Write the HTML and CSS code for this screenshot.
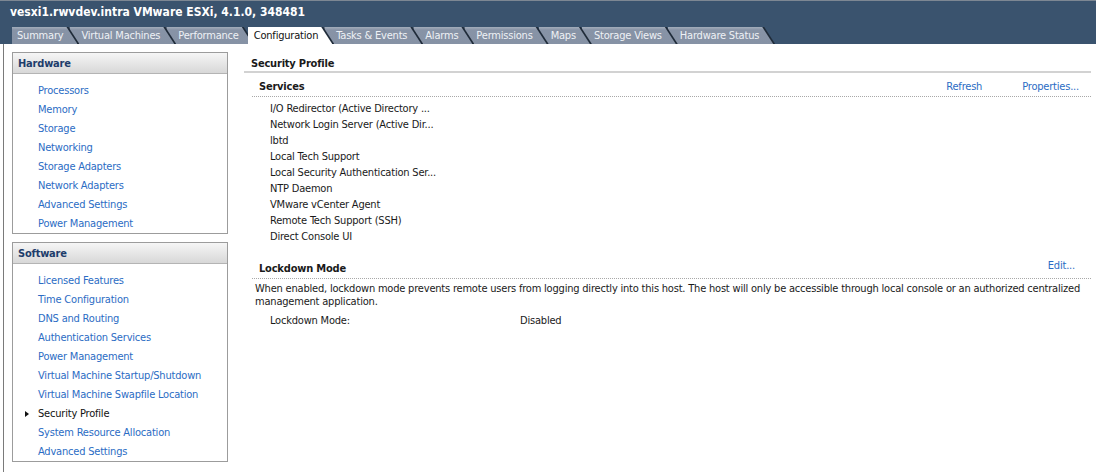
FILE: index.html
```html
<!DOCTYPE html>
<html lang="en">
<head>
  <meta charset="UTF-8">
  <title>vesxi1.rwvdev.intra - Configuration</title>
  <link rel="stylesheet" href="styles.css">
</head>
<body>

  <div class="header">
    <div class="host-title">vesxi1.rwvdev.intra VMware ESXi, 4.1.0, 348481</div>
    <div class="tabs">
      <div class="tab"><span>Summary</span></div>
      <div class="tab"><span>Virtual Machines</span></div>
      <div class="tab"><span>Performance</span></div>
      <div class="tab active"><span>Configuration</span></div>
      <div class="tab"><span>Tasks &amp; Events</span></div>
      <div class="tab"><span>Alarms</span></div>
      <div class="tab"><span>Permissions</span></div>
      <div class="tab"><span>Maps</span></div>
      <div class="tab"><span>Storage Views</span></div>
      <div class="tab"><span>Hardware Status</span></div>
    </div>
  </div>

  <div class="main">
    <div class="sidebar">
      <div class="panel">
        <div class="panel-head">Hardware</div>
        <ul class="panel-list">
          <li><a href="#">Processors</a></li>
          <li><a href="#">Memory</a></li>
          <li><a href="#">Storage</a></li>
          <li><a href="#">Networking</a></li>
          <li><a href="#">Storage Adapters</a></li>
          <li><a href="#">Network Adapters</a></li>
          <li><a href="#">Advanced Settings</a></li>
          <li><a href="#">Power Management</a></li>
        </ul>
      </div>
      <div class="panel">
        <div class="panel-head">Software</div>
        <ul class="panel-list">
          <li><a href="#">Licensed Features</a></li>
          <li><a href="#">Time Configuration</a></li>
          <li><a href="#">DNS and Routing</a></li>
          <li><a href="#">Authentication Services</a></li>
          <li><a href="#">Power Management</a></li>
          <li><a href="#">Virtual Machine Startup/Shutdown</a></li>
          <li><a href="#">Virtual Machine Swapfile Location</a></li>
          <li class="selected">Security Profile</li>
          <li><a href="#">System Resource Allocation</a></li>
          <li><a href="#">Advanced Settings</a></li>
        </ul>
      </div>
    </div>

    <div class="content">
      <div class="page-title">Security Profile</div>

      <div class="section-head">
        <span class="section-name">Services</span>
        <span class="actions">
          <a href="#">Refresh</a>
          <a href="#">Properties...</a>
        </span>
      </div>
      <ul class="services">
        <li>I/O Redirector (Active Directory ...</li>
        <li>Network Login Server (Active Dir...</li>
        <li>lbtd</li>
        <li>Local Tech Support</li>
        <li>Local Security Authentication Ser...</li>
        <li>NTP Daemon</li>
        <li>VMware vCenter Agent</li>
        <li>Remote Tech Support (SSH)</li>
        <li>Direct Console UI</li>
      </ul>

      <div class="section-head lockdown">
        <span class="section-name">Lockdown Mode</span>
        <span class="actions">
          <a href="#">Edit...</a>
        </span>
      </div>
      <p class="note">When enabled, lockdown mode prevents remote users from logging directly into this host. The host will only be accessible through local console or an authorized centralized management application.</p>
      <div class="prop-row">
        <span class="prop-name">Lockdown Mode:</span>
        <span>Disabled</span>
      </div>
    </div>
  </div>

</body>
</html>
```

FILE: styles.css
```css
body {
  margin: 0;
  font-family: "DejaVu Sans Condensed", "DejaVu Sans", sans-serif;
  font-stretch: condensed;
  font-size: 11px;
  letter-spacing: -0.2px;
  color: #1a1a1a;
  background: #fff;
}

a {
  color: #2b6cc4;
  text-decoration: none;
}

ul {
  list-style: none;
  margin: 0;
  padding: 0;
}

/* top bar */

.header {
  background: #3a536e;
  border-top: 1px solid #7d8793;
  height: 43px;
  display: flex;
  flex-direction: column;
  justify-content: space-between;
}

.host-title {
  color: #fff;
  font-weight: bold;
  font-size: 12px;
  letter-spacing: 0;
  padding: 4px 0 0 10px;
}

.tabs {
  display: flex;
  padding-left: 12px;
  height: 17px;
}

.tab {
  position: relative;
  background: #1f2b39;
  padding-right: 2px;
  margin-right: -10px;
  clip-path: polygon(0 0, calc(100% - 11px) 0, 100% 100%, 0 100%);
}

.tab span {
  display: block;
  height: 17px;
  line-height: 18px;
  padding: 0 14px 0 5px;
  background: linear-gradient(#a3adbb, #8793a6 3px, #8692a5);
  color: #eef1f5;
  clip-path: polygon(0 0, calc(100% - 11px) 0, 100% 100%, 0 100%);
}

.tab:nth-child(1) { z-index: 10; }
.tab:nth-child(2) { z-index: 9; }
.tab:nth-child(3) { z-index: 8; }
.tab:nth-child(4) { z-index: 7; }
.tab:nth-child(5) { z-index: 6; }
.tab:nth-child(6) { z-index: 5; }
.tab:nth-child(7) { z-index: 4; }
.tab:nth-child(8) { z-index: 3; }
.tab:nth-child(9) { z-index: 2; }
.tab:nth-child(10) { z-index: 1; }

.tab:not(:first-child) span {
  padding-left: 12px;
}

.tab.active {
  z-index: 20;
  margin-left: 3px;
}

.tab.active span {
  background: #fff;
  color: #111;
  padding-left: 6px;
}

/* body */

.main {
  display: flex;
  margin-left: 3px;
  border-left: 1px solid #7a7a7a;
  height: 428px;
}

.sidebar {
  width: 216px;
  margin-left: 8px;
  padding-top: 8px;
  display: flex;
  flex-direction: column;
  gap: 8px;
}

.panel {
  border: 1px solid #9c9c9c;
}

.panel-head {
  height: 20px;
  line-height: 21px;
  padding-left: 5px;
  font-weight: bold;
  color: #1e3d6b;
  background: linear-gradient(#f6f6f6, #d8d8d8);
  border-bottom: 1px solid #b4b4b4;
}

.panel-list {
  padding: 7px 0 0 25px;
}

.panel-list li {
  height: 19px;
  line-height: 19px;
}

.panel-list li.selected {
  position: relative;
  color: #111;
}

.panel-list li.selected::before {
  content: "";
  position: absolute;
  left: -13px;
  top: 7px;
  border-left: 4px solid #111;
  border-top: 3px solid transparent;
  border-bottom: 3px solid transparent;
}

.content {
  flex: 1;
  margin-left: 16px;
  margin-right: 5px;
}

.page-title {
  font-weight: bold;
  height: 19px;
  line-height: 23px;
  padding: 8px 0 0 7px;
  border-bottom: 2px solid #d2d2d2;
}

.section-head {
  display: flex;
  justify-content: space-between;
  margin: 4px 0 0 8px;
  height: 19px;
  line-height: 20px;
  border-bottom: 1px dotted #a8a8a8;
}

.section-name {
  font-weight: bold;
  padding-left: 7px;
}

.actions {
  display: flex;
  gap: 40px;
  padding-right: 12px;
}

.section-head.lockdown {
  margin-top: 14px;
}

.section-head.lockdown .actions {
  padding-right: 16px;
  line-height: 13px;
}

.services {
  padding: 4px 0 0 26px;
}

.services li {
  height: 16px;
  line-height: 16px;
}

.note {
  margin: 3px 3px 0 11px;
  line-height: 13px;
}

.prop-row {
  display: flex;
  padding: 6px 0 0 26px;
  line-height: 13px;
}

.prop-name {
  width: 250px;
}
```
